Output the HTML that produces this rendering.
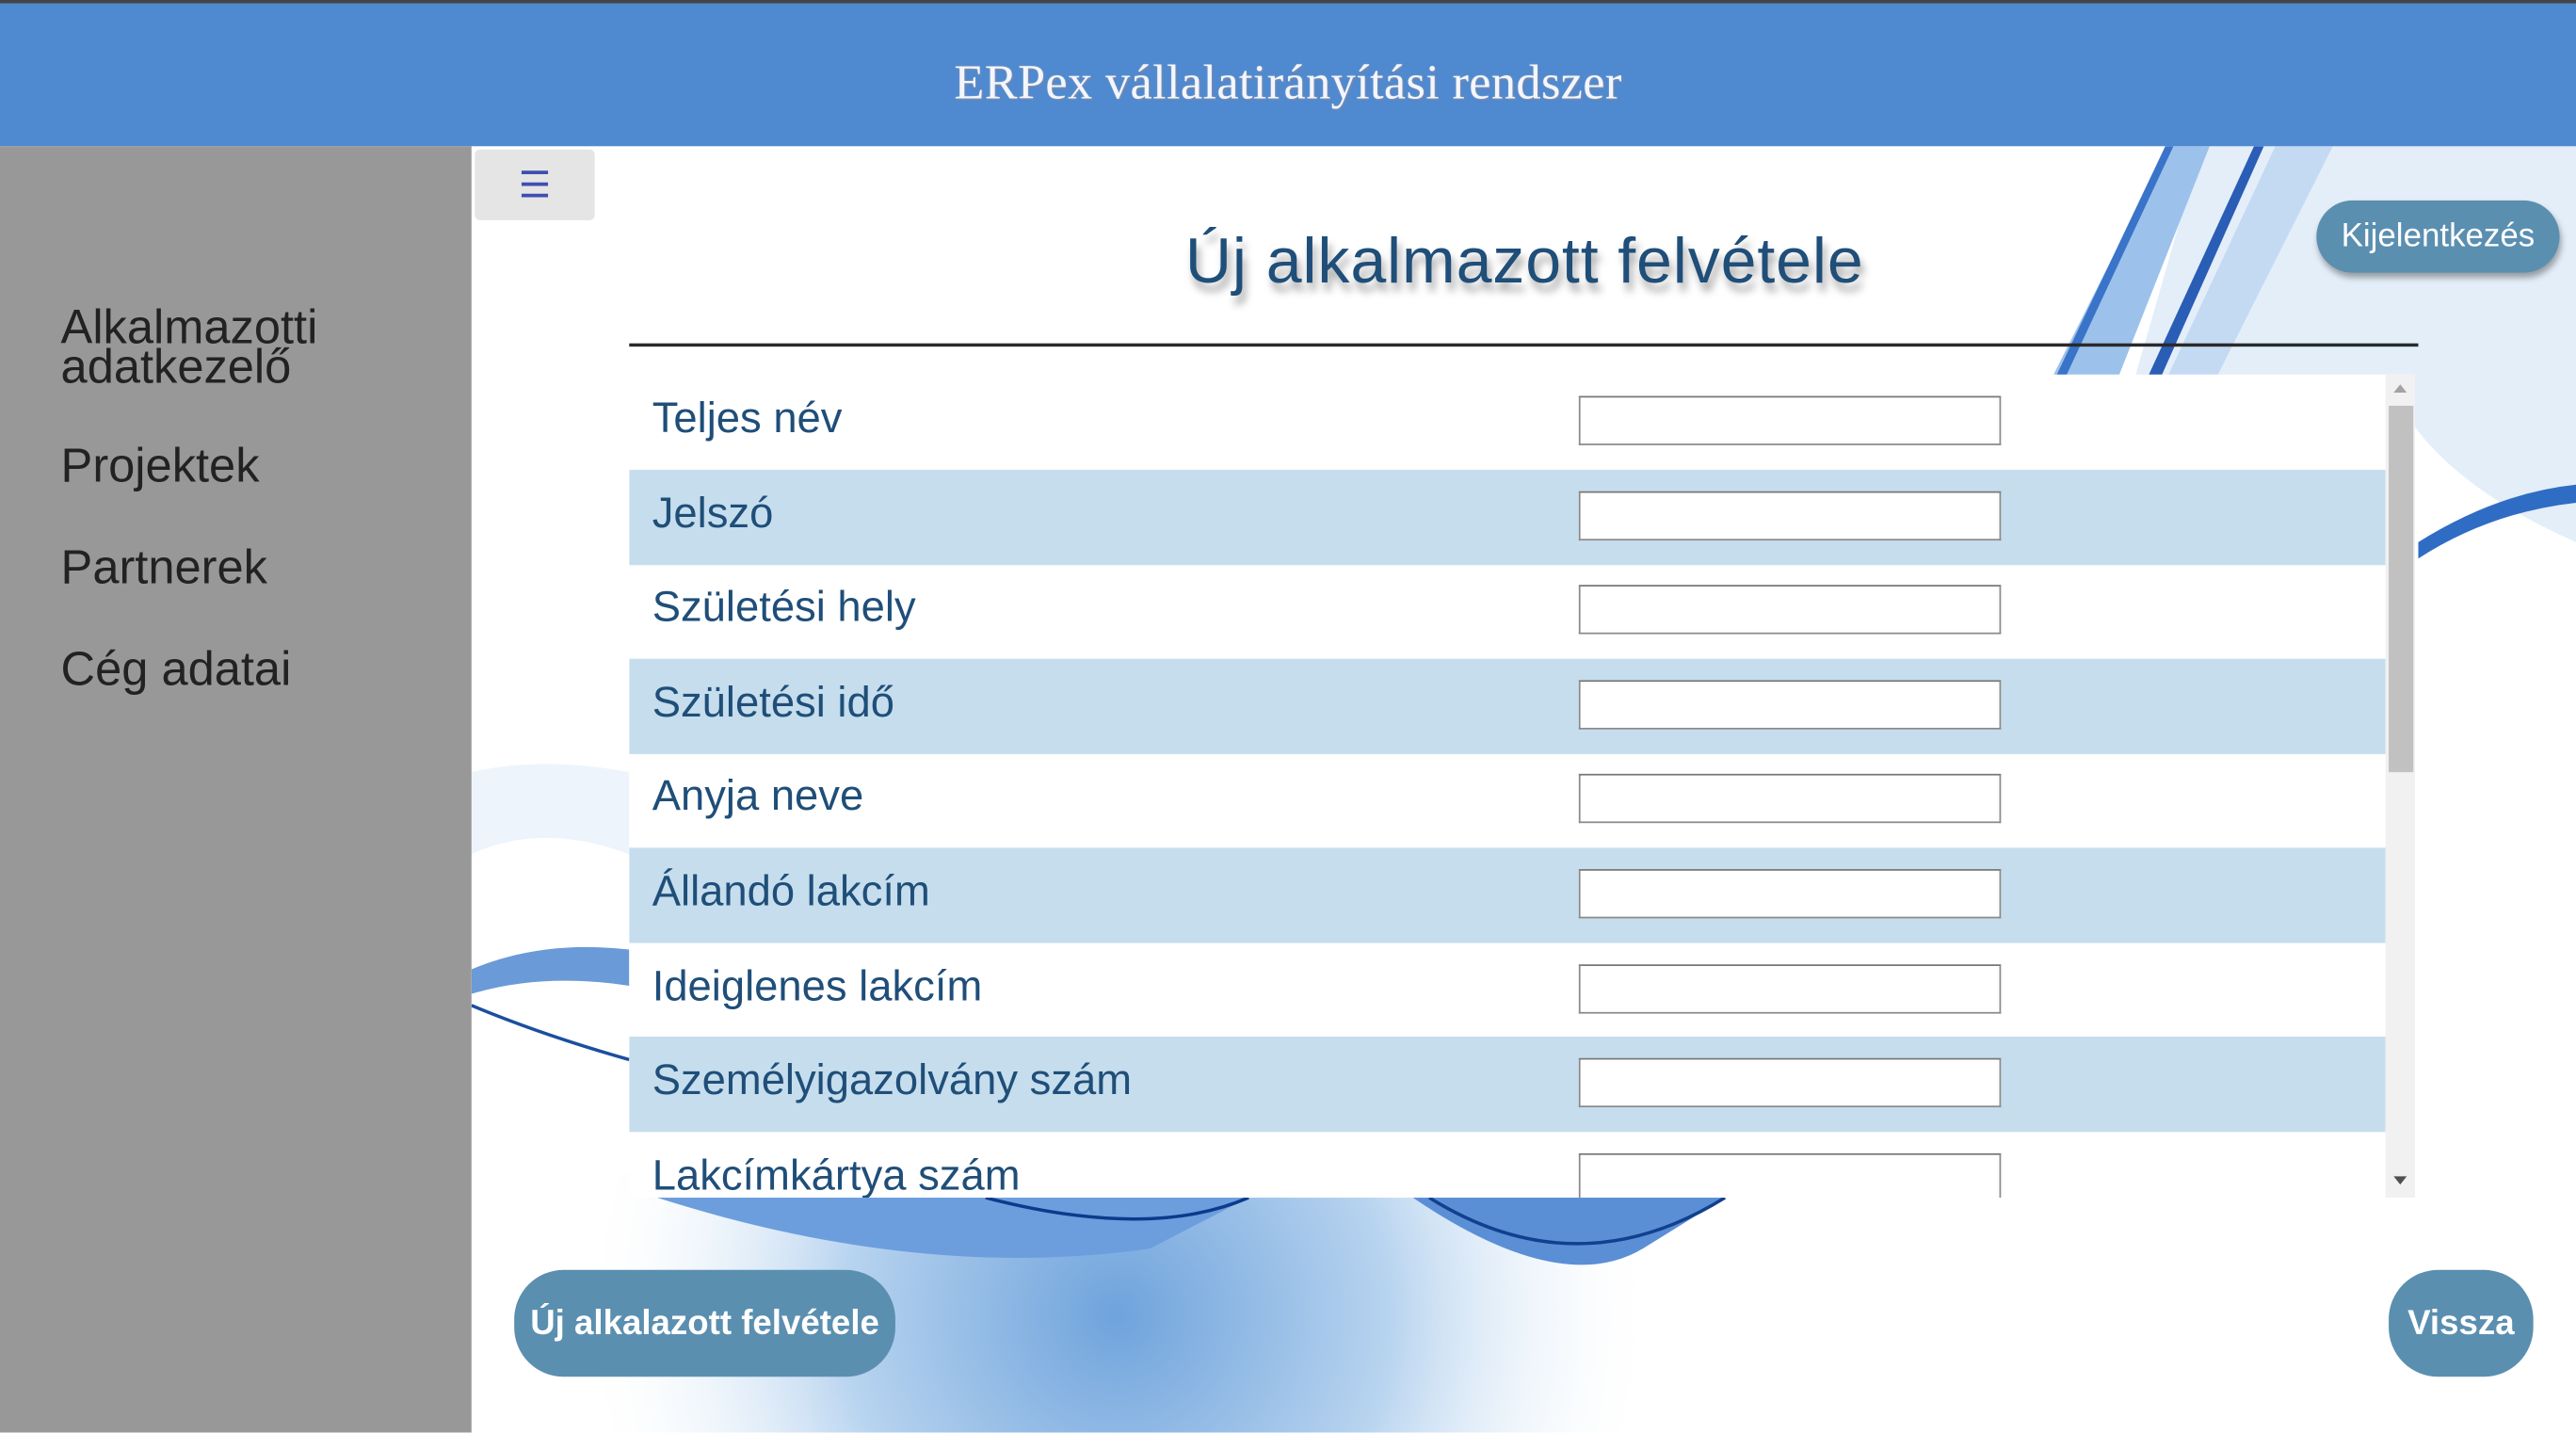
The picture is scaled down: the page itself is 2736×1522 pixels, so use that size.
<!DOCTYPE html>
<html><head><meta charset="utf-8"><style>
html,body{margin:0;padding:0;width:2736px;height:1522px;overflow:hidden;background:#fff}
#w{position:absolute;left:0;top:0;width:1568px;height:872px;transform:scale(1.7449);transform-origin:0 0;font-family:"Liberation Sans",sans-serif;overflow:hidden;background:#fff}
.abs{position:absolute}
#top{left:0;top:0;width:1568px;height:2px;background:#444}
#hdr{left:0;top:2px;width:1568px;height:87px;background:#4f89cf;text-align:center;line-height:98px;font-family:"Liberation Serif",serif;font-size:30px;color:#f4f6fb;text-shadow:0 0 1px #9ab,1px 1px 0 #6a86b8;letter-spacing:.2px}
#side{left:0;top:89px;width:287px;height:784px;background:#989898}
.nav{position:absolute;left:37px;font-size:29px;color:#222;line-height:24px}
#ham{left:289px;top:91px;width:73px;height:43px;background:#e5e5e5;border-radius:3px;color:#3f4fb0;font-size:22px;text-align:center;line-height:43px}
#title{left:600px;width:656px;top:138px;text-align:center;font-size:39px;color:#1f4e79;text-shadow:2px 5px 5px rgba(0,0,0,.35);font-family:"Liberation Sans",sans-serif;letter-spacing:.5px}
#line{left:383px;top:209px;width:1089px;height:2px;background:#2a2a2a}
.btn{position:absolute;background:#5b8fb0;color:#fff;text-align:center}
#tbl{left:383px;top:228px;width:1087px;height:501px;background:#fff;overflow:hidden}
.row{position:absolute;left:0;width:1069px;height:58px}
.row.b{background:#c5ddec}
.row span{position:absolute;left:14px;top:11px;font-size:26px;color:#1f4e79}
.row i{position:absolute;left:578px;top:13px;width:255px;height:28px;background:#fff;border:1px solid #8a8a8a;border-top-color:#777}
#sb{left:1069px;top:0;width:18px;height:501px;background:#f1f1f1}
</style></head><body><div id="w">
<svg class="abs" style="left:287px;top:89px" width="1281" height="784" viewBox="287 89 1281 784">
<defs>
<radialGradient id="g1" cx="680" cy="800" r="330" gradientUnits="userSpaceOnUse"><stop offset="0" stop-color="#6fa3dc"/><stop offset=".5" stop-color="#b7d3ef"/><stop offset="1" stop-color="#fff" stop-opacity="0"/></radialGradient>
</defs>
<rect x="287" y="89" width="1281" height="784" fill="#fff"/>
<ellipse cx="680" cy="800" rx="400" ry="130" fill="url(#g1)"/>
<path d="M1340 89 L1568 89 L1568 330 Q1500 300 1470 260 L1470 228 L1300 228 Z" fill="#e3eef9"/>
<path d="M1250 228 L1320 89 L1345 89 L1290 228 Z" fill="#9cc2ec"/>
<path d="M1252 228 L1318 89 L1323 89 L1258 228 Z" fill="#3a74c9"/>
<path d="M1308 228 L1372 89 L1378 89 L1316 228 Z" fill="#2a5db5"/>
<path d="M1320 228 L1385 89 L1420 89 L1350 228 Z" fill="#c4daf3"/>
<path d="M1472 330 Q1520 300 1568 295 L1568 306 Q1515 312 1472 340 Z" fill="#2f6cc4"/>
<path d="M287 470 Q330 460 383 470 L383 520 Q330 500 287 520 Z" fill="#eef4fb"/>
<path d="M287 590 Q330 572 383 578 L383 600 Q330 592 287 605 Z" fill="#6a9ad8"/>
<path d="M400 729 Q560 780 700 760 L760 729 Z" fill="#6c9edd"/>
<path d="M860 729 Q950 790 1000 760 L1050 729 Z" fill="#5a8fd6"/>
<path d="M600 729 Q700 755 760 729" stroke="#0d3a8c" stroke-width="2" fill="none"/>
<path d="M870 729 Q960 785 1050 729" stroke="#10408e" stroke-width="2" fill="none"/>
<path d="M287 612 Q330 630 383 645" stroke="#1a4f9e" stroke-width="2" fill="none"/>
</svg>
<div class="abs" id="top"></div>
<div class="abs" id="hdr">ERPex vállalatirányítási rendszer</div>
<div class="abs" id="side"></div>
<div class="nav" style="top:188px">Alkalmazotti<br>adatkezelő</div>
<div class="nav" style="top:272px">Projektek</div>
<div class="nav" style="top:334px">Partnerek</div>
<div class="nav" style="top:396px">Cég adatai</div>
<div class="abs" id="ham">☰</div>
<div class="abs" id="title">Új alkalmazott felvétele</div>
<div class="abs" id="line"></div>
<div class="btn" style="left:1410px;top:122px;width:148px;height:44px;border-radius:22px;font-size:20px;line-height:44px;box-shadow:1px 3px 4px rgba(0,0,0,.35)">Kijelentkezés</div>
<div class="abs" id="tbl">
<div class="row" style="top:0"><span>Teljes név</span><i></i></div>
<div class="row b" style="top:58px"><span>Jelszó</span><i></i></div>
<div class="row" style="top:115px"><span>Születési hely</span><i></i></div>
<div class="row b" style="top:173px"><span>Születési idő</span><i></i></div>
<div class="row" style="top:230px"><span>Anyja neve</span><i></i></div>
<div class="row b" style="top:288px"><span>Állandó lakcím</span><i></i></div>
<div class="row" style="top:346px"><span>Ideiglenes lakcím</span><i></i></div>
<div class="row b" style="top:403px"><span>Személyigazolvány szám</span><i></i></div>
<div class="row" style="top:461px"><span>Lakcímkártya szám</span><i></i></div>
<div class="abs" id="sb">
<div class="abs" style="left:5px;top:6px;width:0;height:0;border-left:4px solid transparent;border-right:4px solid transparent;border-bottom:5px solid #a3a3a3"></div>
<div class="abs" style="left:2px;top:19px;width:15px;height:223px;background:#c1c1c1"></div>
<div class="abs" style="left:5px;top:488px;width:0;height:0;border-left:4px solid transparent;border-right:4px solid transparent;border-top:5px solid #505050"></div>
</div>
</div>
<div class="btn" style="left:313px;top:773px;width:232px;height:65px;border-radius:30px;font-size:21px;font-weight:bold;line-height:65px">Új alkalazott felvétele</div>
<div class="btn" style="left:1454px;top:773px;width:88px;height:65px;border-radius:30px;font-size:21px;font-weight:bold;line-height:65px">Vissza</div>
</div></body></html>
